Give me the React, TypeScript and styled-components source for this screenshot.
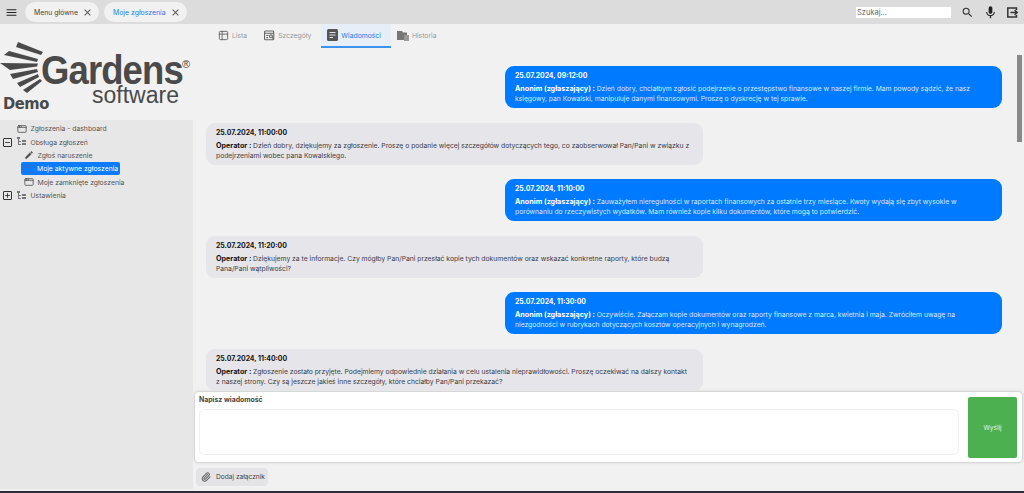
import { createGlobalStyle, styled } from "styled-components";
import { MdMenu, MdClose, MdSearch, MdMic, MdEdit } from "react-icons/md";
import { Table2, Paperclip, AppWindow, Minus, Plus } from "lucide-react";

const GlobalStyle = createGlobalStyle`
  html, body {
    margin: 0;
    padding: 0;
    height: 100%;
    overflow: hidden;
    background: #f1f1f1;
    font-family: Inter, "Liberation Sans", sans-serif;
  }
  * { box-sizing: border-box; }
`;

interface Message {
  time: string;
  author: string;
  lines: string[];
  mine: boolean;
}

const messages: Message[] = [
  {
    time: "25.07.2024, 09:12:00",
    author: "Anonim (zgłaszający)",
    mine: true,
    lines: [
      "Dzień dobry, chciałbym zgłosić podejrzenie o przestępstwo finansowe w naszej firmie. Mam powody sądzić, że nasz",
      "księgowy, pan Kowalski, manipuluje danymi finansowymi. Proszę o dyskrecję w tej sprawie.",
    ],
  },
  {
    time: "25.07.2024, 11:00:00",
    author: "Operator",
    mine: false,
    lines: [
      "Dzień dobry, dziękujemy za zgłoszenie. Proszę o podanie więcej szczegółów dotyczących tego, co zaobserwował Pan/Pani w związku z",
      "podejrzeniami wobec pana Kowalskiego.",
    ],
  },
  {
    time: "25.07.2024, 11:10:00",
    author: "Anonim (zgłaszający)",
    mine: true,
    lines: [
      "Zauważyłem nieregulności w raportach finansowych za ostatnie trzy miesiące. Kwoty wydają się zbyt wysokie w",
      "porównaniu do rzeczywistych wydatków. Mam również kopie kilku dokumentów, które mogą to potwierdzić.",
    ],
  },
  {
    time: "25.07.2024, 11:20:00",
    author: "Operator",
    mine: false,
    lines: [
      "Dziękujemy za te informacje. Czy mógłby Pan/Pani przesłać kopie tych dokumentów oraz wskazać konkretne raporty, które budzą",
      "Pana/Pani wątpliwości?",
    ],
  },
  {
    time: "25.07.2024, 11:30:00",
    author: "Anonim (zgłaszający)",
    mine: true,
    lines: [
      "Oczywiście. Załączam kopie dokumentów oraz raporty finansowe z marca, kwietnia i maja. Zwróciłem uwagę na",
      "niezgodności w rubrykach dotyczących kosztów operacyjnych i wynagrodzeń.",
    ],
  },
  {
    time: "25.07.2024, 11:40:00",
    author: "Operator",
    mine: false,
    lines: [
      "Zgłoszenie zostało przyjęte. Podejmiemy odpowiednie działania w celu ustalenia nieprawidłowości. Proszę oczekiwać na dalszy kontakt",
      "z naszej strony. Czy są jeszcze jakieś inne szczegóły, które chciałby Pan/Pani przekazać?",
    ],
  },
];

function LogoRays() {
  // fan of wedges left of the wordmark
  const wedges = [
    "M18 0 L43 10 L41 13 L16 5 Z",
    "M9 9 L38 17 L37 20 L4 13 Z",
    "M0 21 L38 21.5 L37 24.5 L10 28 Z",
    "M10 32 L37 27 L38 30 L13 37 Z",
    "M17 41 L38 32 L39 35 L20 45 Z",
    "M23 48 L40 37 L42 39 L27 51 Z",
  ];
  return (
    <RaySvg viewBox="0 0 44 52" width="44" height="52">
      {wedges.map((d) => (
        <path key={d} d={d} fill="#4a4a4a" />
      ))}
    </RaySvg>
  );
}

function BranchIcon() {
  return (
    <svg width="10" height="10" viewBox="0 0 10 10" fill="#777">
      <rect x="0" y="0" width="3" height="2" />
      <rect x="1" y="2" width="1" height="6" />
      <rect x="2" y="4" width="2" height="1" />
      <rect x="2" y="7" width="2" height="1" />
      <rect x="5" y="3" width="4" height="2" />
      <rect x="5" y="6" width="4" height="2" />
    </svg>
  );
}

function DetailsIcon() {
  return (
    <svg width="11" height="11" viewBox="0 0 12 11" fill="none" stroke="#666" strokeWidth="1.2">
      <rect x="0.6" y="0.6" width="10" height="9.6" rx="1" />
      <path d="M0.6 3 H10.6 M2.5 5.5 H5 M2.5 7.8 H4.5" />
      <circle cx="7.6" cy="6.4" r="1.6" />
      <path d="M8.8 7.6 L10.6 9.4" />
    </svg>
  );
}

function MessagesIcon() {
  return (
    <svg width="11" height="12" viewBox="0 0 11 12">
      <rect x="0" y="0" width="11" height="12" rx="1.5" fill="#555" />
      <path d="M2.5 3.5 H8.5 M2.5 6 H8.5 M2.5 8.5 H6" stroke="#dfe7ef" strokeWidth="1" />
    </svg>
  );
}

function HistoryIcon() {
  return (
    <svg width="12" height="11" viewBox="0 0 12 11">
      <path d="M0 1 H5 L6 2.5 H10 V10 H0 Z" fill="#777" />
      <rect x="7" y="5" width="5" height="6" fill="#999" />
    </svg>
  );
}

function ExitIcon() {
  return (
    <svg width="11" height="11" viewBox="0 0 11 11" fill="none" stroke="#333" strokeWidth="1.5">
      <path d="M9.5 3 V1 H0.8 V10 H9.5 V8" />
      <path d="M3.5 5.5 H10 M7.6 3 L10.2 5.5 L7.6 8" />
    </svg>
  );
}

export default function App() {
  return (
    <Page>
      <GlobalStyle />
      <TopBar>
        <BurgerBtn>
          <MdMenu size={13} />
        </BurgerBtn>
        <TopTab>
          <TopTabLabel>Menu główne</TopTabLabel>
          <MdClose size={11} color="#555" />
        </TopTab>
        <TopTab $active>
          <TopTabLabel $active>Moje zgłoszenia</TopTabLabel>
          <MdClose size={11} color="#555" />
        </TopTab>
        <TopRight>
          <SearchField placeholder="Szukaj..." />
          <MdSearch size={13} color="#333" />
          <MdMic size={15} color="#222" />
          <ExitIcon />
        </TopRight>
      </TopBar>
      <Body>
        <Sidebar>
          <Logo>
            <LogoRays />
            <LogoWord>Gardens</LogoWord>
            <Reg>®</Reg>
            <LogoSub>software</LogoSub>
            <LogoDemo>Demo</LogoDemo>
          </Logo>
          <Tree>
            <TreeRow $level={1}>
              <AppWindow size={10} color="#555" />
              <TreeLabel>Zgłoszenia - dashboard</TreeLabel>
            </TreeRow>
            <TreeRow $level={0}>
              <Toggle><Minus size={7} strokeWidth={3} /></Toggle>
              <BranchIcon />
              <TreeLabel>Obsługa zgłoszeń</TreeLabel>
            </TreeRow>
            <TreeRow $level={2}>
              <MdEdit size={10} color="#555" />
              <TreeLabel>Zgłoś naruszenie</TreeLabel>
            </TreeRow>
            <TreeRow $level={2}>
              <Selected>
                <AppWindow size={10} color="#2f6fd0" />
                <TreeLabel $selected>Moje aktywne zgłoszenia</TreeLabel>
              </Selected>
            </TreeRow>
            <TreeRow $level={2}>
              <AppWindow size={10} color="#555" />
              <TreeLabel>Moje zamknięte zgłoszenia</TreeLabel>
            </TreeRow>
            <TreeRow $level={0}>
              <Toggle><Plus size={7} strokeWidth={3} /></Toggle>
              <BranchIcon />
              <TreeLabel>Ustawienia</TreeLabel>
            </TreeRow>
          </Tree>
        </Sidebar>
        <Main>
          <Tabs>
            <ViewTab>
              <Table2 size={11} />
              Lista
            </ViewTab>
            <ViewTab>
              <DetailsIcon />
              Szczegóły
            </ViewTab>
            <ViewTab $active>
              <MessagesIcon />
              Wiadomości
            </ViewTab>
            <ViewTab>
              <HistoryIcon />
              Historia
            </ViewTab>
          </Tabs>
          <Feed>
            {messages.map((m) => (
              <Bubble key={m.time} $mine={m.mine}>
                <BubbleTime>{m.time}</BubbleTime>
                <BubbleText $mine={m.mine}>
                  <b>{m.author} : </b>
                  {m.lines[0]}
                  <br />
                  {m.lines[1]}
                </BubbleText>
              </Bubble>
            ))}
            <ScrollThumb />
          </Feed>
          <Composer>
            <ComposerLeft>
              <ComposerTitle>Napisz wiadomość</ComposerTitle>
              <MessageInput />
            </ComposerLeft>
            <SendBtn>Wyślij</SendBtn>
          </Composer>
          <AttachRow>
            <AttachBtn>
              <Paperclip size={10} strokeWidth={2.5} />
              Dodaj załącznik
            </AttachBtn>
          </AttachRow>
        </Main>
      </Body>
      <BottomEdge />
    </Page>
  );
}

const Page = styled.div`
  width: 1024px;
  height: 493px;
  display: flex;
  flex-direction: column;
  overflow: hidden;
  background: #f1f1f1;
`;

const TopBar = styled.div`
  height: 24px;
  flex: none;
  background: #dcdcdc;
  display: flex;
  align-items: center;
  padding-left: 5px;
  gap: 5px;
`;

const BurgerBtn = styled.div`
  width: 13px;
  height: 13px;
  color: #222;
  display: flex;
  align-items: center;
  justify-content: center;
  margin-right: 2px;
`;

const TopTab = styled.div<{ $active?: boolean }>`
  height: 20px;
  border-radius: 10px;
  background: #f1f1f1;
  display: flex;
  align-items: center;
  gap: 4px;
  padding: 0 6px 0 9px;
`;

const TopTabLabel = styled.span<{ $active?: boolean }>`
  font-size: 6.9px;
  color: ${(p) => (p.$active ? "#1f80f0" : "#444")};
`;

const TopRight = styled.div`
  margin-left: auto;
  display: flex;
  align-items: center;
  gap: 9px;
  padding-right: 6px;
`;

const SearchField = styled.input`
  width: 95px;
  height: 11px;
  border: none;
  outline: none;
  background: #fff;
  font-size: 7.5px;
  padding: 0 1px;
  font-family: inherit;
  margin-right: 1px;
  &::placeholder {
    color: #666;
  }
`;

const Body = styled.div`
  flex: 1;
  min-height: 0;
  display: flex;
`;

const Sidebar = styled.div`
  width: 193px;
  flex: none;
  display: flex;
  flex-direction: column;
`;

const Logo = styled.div`
  position: relative;
  height: 96px;
  flex: none;
  color: #4a4a4a;
  font-family: "Liberation Sans", sans-serif;
`;

const RaySvg = styled.svg`
  position: absolute;
  left: 0;
  top: 18px;
`;

const LogoWord = styled.div`
  position: absolute;
  left: 41px;
  top: 30px;
  font-size: 41px;
  line-height: 32px;
  font-weight: 700;
  letter-spacing: -1px;
  transform: scaleX(0.89);
  transform-origin: left center;
`;

const Reg = styled.span`
  position: absolute;
  left: 182px;
  top: 34px;
  font-size: 11px;
  line-height: 12px;
`;

const LogoSub = styled.div`
  position: absolute;
  left: 92px;
  top: 62px;
  font-size: 23px;
  line-height: 18px;
`;

const LogoDemo = styled.div`
  position: absolute;
  left: 3px;
  top: 70px;
  font-family: "DejaVu Sans", sans-serif;
  font-size: 16px;
  line-height: 20px;
  font-weight: 700;
  letter-spacing: -0.5px;
  transform: scaleX(0.92);
  transform-origin: left center;
`;

const Tree = styled.div`
  flex: 1;
  background: #e7e7e7;
  padding-top: 2px;
  margin-bottom: 2px;
`;

const TreeRow = styled.div<{ $level: number }>`
  height: 13.4px;
  display: flex;
  align-items: center;
  gap: 3.5px;
  padding-left: ${(p) => [3, 17, 24][p.$level]}px;
`;

const Toggle = styled.span`
  width: 9px;
  height: 9px;
  border: 1px solid #333;
  border-radius: 1px;
  display: flex;
  align-items: center;
  justify-content: center;
  color: #333;
  margin-right: 1.5px;
`;

const TreeLabel = styled.span<{ $selected?: boolean }>`
  font-size: 6.8px;
  color: ${(p) => (p.$selected ? "#fff" : "#555")};
  white-space: nowrap;
`;

const Selected = styled.div`
  display: flex;
  align-items: center;
  gap: 3px;
  background: #0a7cff;
  border-radius: 2px;
  height: 13px;
  padding: 0 2px 0 3px;
  margin-left: -3px;
`;

const Main = styled.div`
  flex: 1;
  min-width: 0;
  display: flex;
  flex-direction: column;
`;

const Tabs = styled.div`
  height: 24px;
  flex: none;
  display: flex;
  padding-left: 19px;
`;

const ViewTab = styled.div<{ $active?: boolean }>`
  height: 24px;
  display: flex;
  align-items: center;
  gap: 3px;
  padding: 0 ${(p) => (p.$active ? 10 : 6)}px 0 6px;
  margin: 0 ${(p) => (p.$active ? 0 : 5)}px 0 ${(p) => (p.$active ? -1 : 0)}px;
  font-size: 6.8px;
  color: ${(p) => (p.$active ? "#1f80f0" : "#999")};
  background: ${(p) => (p.$active ? "#e6eef7" : "transparent")};
  border-bottom: 2px solid ${(p) => (p.$active ? "#3b93ee" : "transparent")};
  svg {
    flex: none;
    color: #666;
  }
`;

const Feed = styled.div`
  position: relative;
  height: 344px;
  flex: none;
  padding: 18px 22px 0 13px;
  display: flex;
  flex-direction: column;
  gap: 14.6px;
  overflow: hidden;
`;

const Bubble = styled.div<{ $mine: boolean }>`
  width: 497px;
  height: 42px;
  flex: none;
  border-radius: 9px;
  padding: 5px 10px;
  align-self: ${(p) => (p.$mine ? "flex-end" : "flex-start")};
  background: ${(p) => (p.$mine ? "#007bff" : "#e5e5ea")};
  color: ${(p) => (p.$mine ? "#fff" : "#111")};
`;

const BubbleTime = styled.div`
  font-size: 6.9px;
  line-height: 10px;
  font-weight: 700;
  margin-bottom: 3px;
`;

const BubbleText = styled.div<{ $mine: boolean }>`
  font-size: 6.78px;
  line-height: 10px;
  white-space: nowrap;
  color: ${(p) => (p.$mine ? "#d7e9ff" : "#3c3c44")};
  b {
    font-size: 7.2px;
    color: ${(p) => (p.$mine ? "#fff" : "#111")};
  }
`;

const ScrollThumb = styled.div`
  position: absolute;
  right: 2px;
  top: 7px;
  width: 5px;
  height: 87px;
  background: #888;
`;

const Composer = styled.div`
  flex: none;
  height: 70px;
  margin: 0 2px;
  background: #fff;
  border-radius: 4px;
  box-shadow: 0 0 3px rgba(0, 0, 0, 0.3);
  display: flex;
  padding: 5px 5px 4px 4px;
  gap: 9px;
`;

const ComposerLeft = styled.div`
  flex: 1;
  display: flex;
  flex-direction: column;
`;

const ComposerTitle = styled.div`
  font-size: 6.9px;
  font-weight: 700;
  color: #444;
  line-height: 10px;
  margin-bottom: 4px;
  margin-top: -2px;
`;

const MessageInput = styled.textarea`
  flex: none;
  height: 46px;
  resize: none;
  outline: none;
  border: 1px solid #f0f0f3;
  border-radius: 5px;
  background: #fff;
`;

const SendBtn = styled.div`
  width: 49px;
  height: 61px;
  background: #4caf50;
  border-radius: 2px;
  color: #e6f5e6;
  font-size: 6.5px;
  display: flex;
  align-items: center;
  justify-content: center;
`;

const AttachRow = styled.div`
  flex: 1;
  display: flex;
  align-items: center;
  padding-left: 3px;
`;

const AttachBtn = styled.div`
  width: 72px;
  height: 18px;
  background: #e4e4e6;
  border-radius: 4px;
  display: flex;
  align-items: center;
  gap: 5px;
  padding-left: 5px;
  font-size: 6.6px;
  color: #444;
  white-space: nowrap;
  svg {
    color: #666;
  }
`;

const BottomEdge = styled.div`
  height: 2px;
  flex: none;
  background: #2d2d3a;
`;
